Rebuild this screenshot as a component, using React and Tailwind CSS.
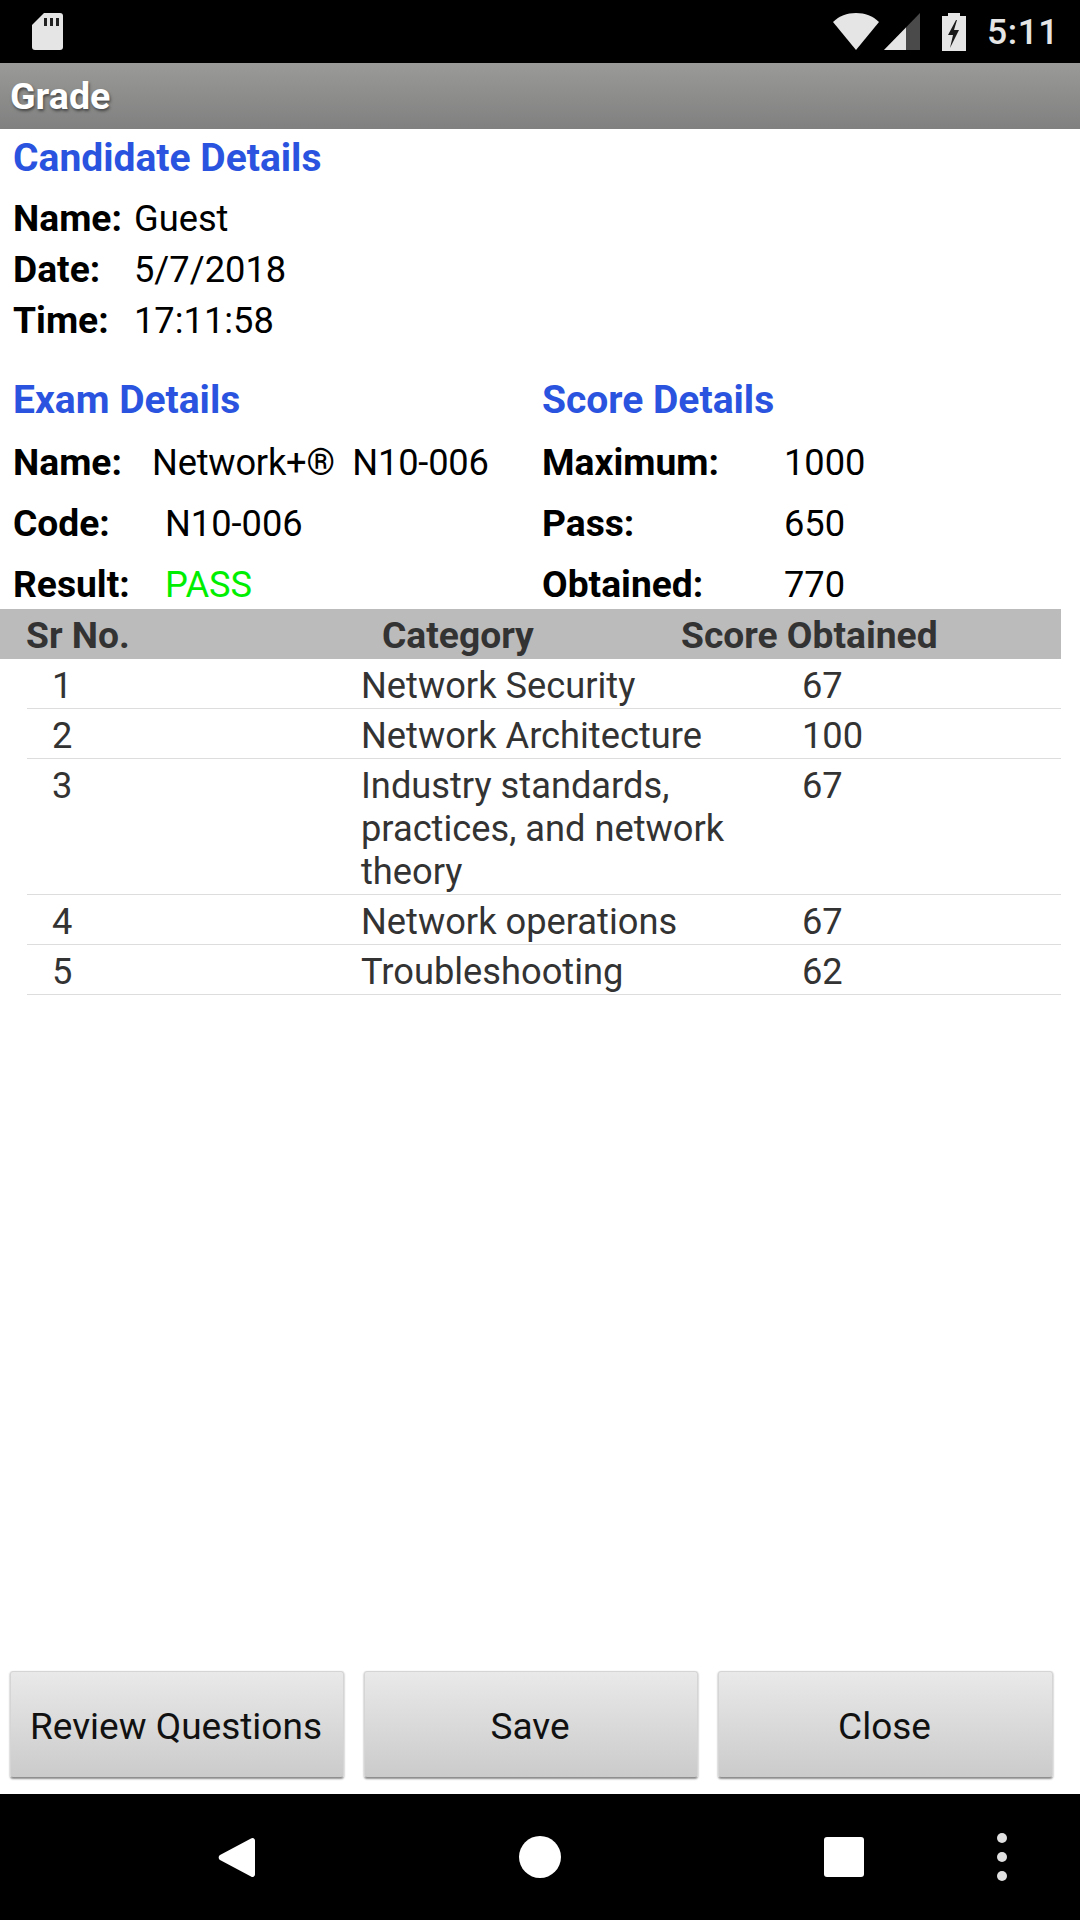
const CANDIDATE = [
  { label: 'Name:', value: 'Guest' },
  { label: 'Date:', value: '5/7/2018' },
  { label: 'Time:', value: '17:11:58' },
]

const SCORES = [
  { label: 'Maximum:', value: '1000' },
  { label: 'Pass:', value: '650' },
  { label: 'Obtained:', value: '770' },
]

const ROWS = [
  { no: '1', category: 'Network Security', score: '67' },
  { no: '2', category: 'Network Architecture', score: '100' },
  { no: '3', category: 'Industry standards, practices, and network theory', score: '67' },
  { no: '4', category: 'Network operations', score: '67' },
  { no: '5', category: 'Troubleshooting', score: '62' },
]

function StatusBar() {
  return (
    <div className="h-[63px] shrink-0 bg-black flex items-center pl-[32px] pr-[21px]">
      <svg width="31" height="37" viewBox="0 0 31 37">
        <path d="M12 0H28a3 3 0 0 1 3 3V34a3 3 0 0 1-3 3H3a3 3 0 0 1-3-3V12z" fill="#e5e5e5" />
        <path d="M12 5h3v8h-3zM18 5h3v8h-3zM24 5h3v8h-3z" fill="#222" />
      </svg>
      <div className="flex-1" />
      <svg width="46" height="37" viewBox="0 0 46 37">
        <path d="M0 9C6 3 14 0 23 0s17 3 23 9L23 37z" fill="#e5e5e5" />
      </svg>
      <svg className="ml-[5px]" width="36" height="37" viewBox="0 0 36 37">
        <path d="M36 0V37H0z" fill="#4a4a4a" />
        <path d="M22 14.5V37H0z" fill="#e5e5e5" />
      </svg>
      <svg className="ml-[22px]" width="24" height="38" viewBox="0 0 24 38">
        <path d="M6 3V0h12v3h6v35H0V3z" fill="#e5e5e5" />
        <path d="M14 7L6 22h5l-3 13 9-18h-5l3-10z" fill="#1a1a1a" />
      </svg>
      <span className="ml-[21px] pt-[2px] text-[35.5px] leading-none text-[#e5e5e5] tracking-[0.5px] font-medium">5:11</span>
    </div>
  )
}

function NavBar() {
  return (
    <div className="h-[126px] shrink-0 bg-black flex items-center relative">
      <svg className="ml-[217px]" width="38" height="43" viewBox="0 0 38 43">
        <path d="M34 2.5L3 19a3 3 0 0 0 0 5l31 16.5a2.5 2.5 0 0 0 4-2V4.5a2.5 2.5 0 0 0-4-2z" fill="#fff" />
      </svg>
      <div className="ml-[264px] w-[42px] h-[42px] rounded-full bg-white" />
      <div className="ml-[263px] w-[40px] h-[40px] rounded-[3px] bg-white" />
      <div className="ml-[133px] flex flex-col gap-[9px]">
        <div className="w-[10px] h-[10px] rounded-full bg-[#e0e0e0]" />
        <div className="w-[10px] h-[10px] rounded-full bg-[#e0e0e0]" />
        <div className="w-[10px] h-[10px] rounded-full bg-[#e0e0e0]" />
      </div>
    </div>
  )
}

function SectionTitle({ children }) {
  return <div className="text-[39px] leading-[43px] font-bold text-[#2a54e0]">{children}</div>
}

function Row({ label, value, offset, className, valueClass = '' }) {
  return (
    <div className={`flex items-center ${className}`}>
      <span className={`font-bold text-[37.2px] ${offset}`}>{label}</span>
      <span className={valueClass}>{value}</span>
    </div>
  )
}

function ActionButton({ children }) {
  return (
    <button className="h-[107px] pt-[3px] pr-[2px] rounded-[3px] bg-gradient-to-b from-[#e9e9e9] to-[#cbcbcb] border border-[#d5d5d5] border-b-[#8f8f8f] shadow-[0_1px_2px_rgba(0,0,0,0.45)] text-[37px] text-[#111]">
      {children}
    </button>
  )
}

export default function App() {
  return (
    <div className="w-[1080px] h-[1920px] flex flex-col bg-white text-black text-[36.25px] leading-[43px] font-[family-name:Roboto,sans-serif] overflow-hidden">
      <StatusBar />

      <div className="h-[66px] shrink-0 bg-gradient-to-b from-[#9a9a98] to-[#808080] pl-[10px] flex items-center">
        <span className="text-[37.6px] font-bold text-white [text-shadow:1px_2px_3px_#444]">Grade</span>
      </div>

      <div className="flex-1 min-h-0">
        {/* Candidate */}
        <div className="pl-[13px] pt-[8px]">
          <SectionTitle>Candidate Details</SectionTitle>
          <div className="mt-[13px]">
            {CANDIDATE.map(r => (
              <Row key={r.label} label={r.label} value={r.value} offset="w-[121px]" className="h-[51px]" />
            ))}
          </div>
        </div>

        {/* Exam + score */}
        <div className="grid grid-cols-[529px_1fr] pl-[13px] mt-[33px]">
          <div>
            <SectionTitle>Exam Details</SectionTitle>
            <div className="mt-[16px] flex flex-col gap-[12px]">
              <Row label="Name:" value="Network+®  N10-006" offset="w-[139px]" className="h-[49px] whitespace-pre" valueClass="tracking-[-0.2px]" />
              <Row label="Code:" value="N10-006" offset="w-[152px]" className="h-[49px]" />
              <div className="flex items-center h-[49px]">
                <span className="font-bold text-[37.2px] w-[152px]">Result:</span>
                <span className="text-[#00ee00]">PASS</span>
              </div>
            </div>
          </div>
          <div>
            <SectionTitle>Score Details</SectionTitle>
            <div className="mt-[16px] flex flex-col gap-[12px]">
              {SCORES.map(r => (
                <Row key={r.label} label={r.label} value={r.value} offset="w-[242px]" className="h-[49px]" />
              ))}
            </div>
          </div>
        </div>

        {/* Table */}
        <div className="w-[1061px] text-[#333]">
          <div className="h-[50px] pt-[2px] bg-[#bbbbbb] grid grid-cols-[382px_299px_1fr] items-center font-bold text-[37.2px]">
            <span className="pl-[26px]">Sr No.</span>
            <span>Category</span>
            <span>Score Obtained</span>
          </div>
          <div className="ml-[27px]">
            {ROWS.map(r => (
              <div key={r.no} className="grid grid-cols-[334px_441px_1fr] pt-[5px] pb-[1px] border-b-[1px] border-[#dddddd]">
                <span className="pl-[25px]">{r.no}</span>
                <span>{r.category}</span>
                <span>{r.score}</span>
              </div>
            ))}
          </div>
        </div>
      </div>

      <div className="shrink-0 grid grid-cols-[334px_334px_335px] gap-x-[20px] pl-[10px] pr-[27px] pb-[16px]">
        <ActionButton>Review Questions</ActionButton>
        <ActionButton>Save</ActionButton>
        <ActionButton>Close</ActionButton>
      </div>

      <NavBar />
    </div>
  )
}
